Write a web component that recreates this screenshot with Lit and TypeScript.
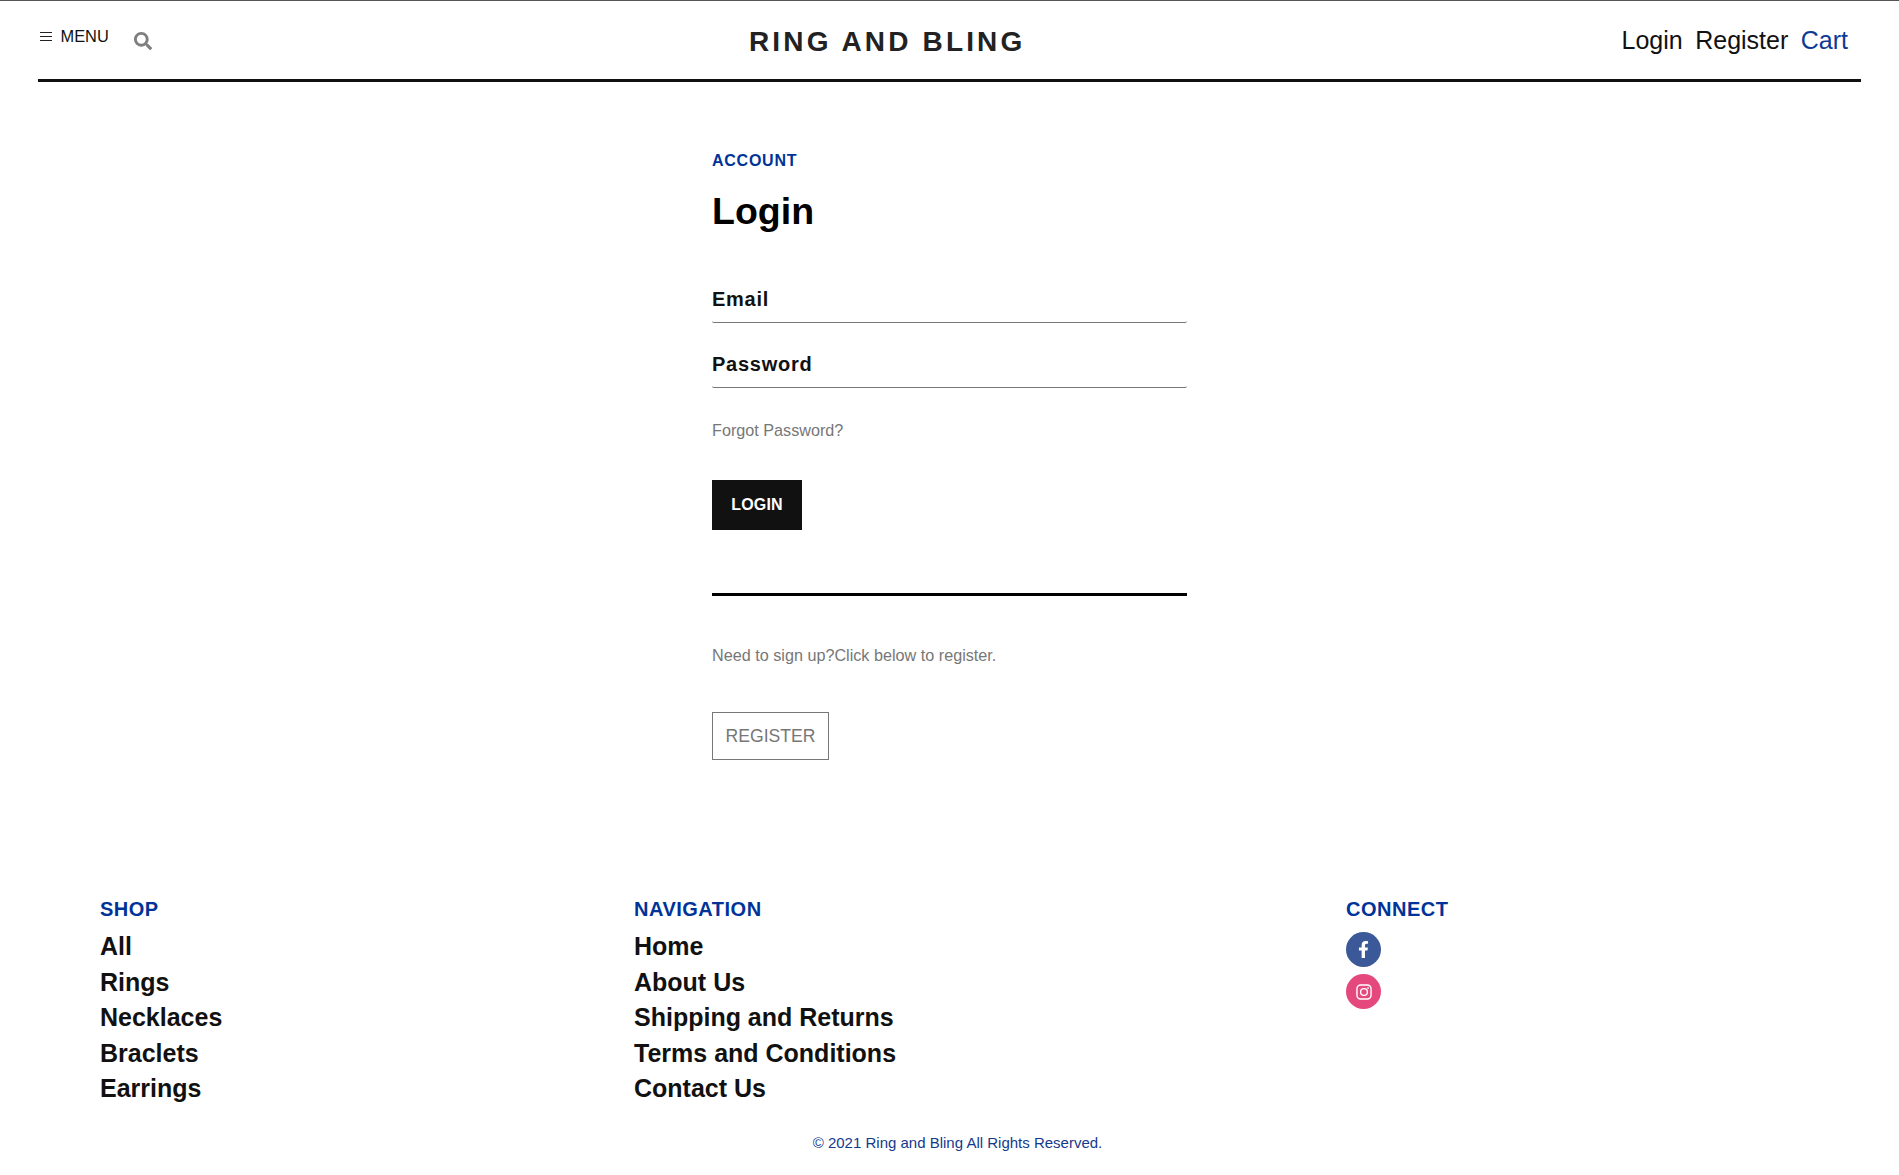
import { LitElement, html, css } from "lit";
import { customElement } from "lit/decorators.js";

const SHOP = ["All", "Rings", "Necklaces", "Braclets", "Earrings"];
const NAV = ["Home", "About Us", "Shipping and Returns", "Terms and Conditions", "Contact Us"];

@customElement("app-root")
export class AppRoot extends LitElement {
  static styles = css`
    :host {
      display: block;
      min-height: 1175px;
      background: #fff;
      font-family: "Liberation Sans", Arial, sans-serif;
      color: #111;
      border-top: 1px solid #555;
      box-sizing: border-box;
    }
    a { color: inherit; text-decoration: none; }
    .header {
      margin: 0 38px;
      height: 78px;
      border-bottom: 3px solid #111;
      display: grid;
      grid-template-columns: 711px auto 1fr;
      align-items: start;
    }
    .left { display: flex; align-items: flex-start; padding-top: 26px; padding-left: 2px; }
    .burger { display: block; margin-top: 5px; width: 12px; height: 10px; }
    .menu { font-size: 16.4px; line-height: 18px; margin-left: 8.5px; color: #111; }
    .search { display: block; width: 18px; height: 18px; margin-left: 25px; margin-top: 5px; fill: #7f7f7f; }
    .brand {
      font-size: 28px;
      font-weight: 700;
      letter-spacing: 3.15px;
      line-height: 32px;
      padding-top: 25px;
      color: #222;
      white-space: nowrap;
    }
    .right {
      display: flex;
      justify-content: flex-end;
      gap: 12.5px;
      padding-top: 25px;
      padding-right: 13px;
      font-size: 25px;
      line-height: 28px;
    }
    .cart { color: #0d3a94; }
    .main {
      width: 475px;
      margin: 0 auto;
      display: flex;
      flex-direction: column;
      align-items: flex-start;
    }
    .eyebrow {
      margin-top: 69px;
      font-size: 16px;
      font-weight: 700;
      line-height: 20px;
      letter-spacing: 0.75px;
      color: #003399;
    }
    h1 {
      margin: 18px 0 0;
      font-size: 37.5px;
      line-height: 44px;
      font-weight: 700;
      color: #000;
    }
    .field {
      display: block;
      box-sizing: border-box;
      width: 100%;
      height: 48px;
      padding: 1px 0 0;
      border: 0;
      border-bottom: 1.5px solid #777;
      border-radius: 2px;
      outline: 0;
      background: transparent;
      font: 700 20px "Liberation Sans", Arial, sans-serif;
      letter-spacing: 0.75px;
      color: #111;
    }
    .field::placeholder { color: #111; opacity: 1; }
    .email { margin-top: 42px; }
    .password { margin-top: 17px; }
    .muted { font-size: 16.2px; line-height: 20px; color: #777; }
    .forgot { margin-top: 32px; }
    .login {
      margin-top: 40px;
      width: 90px;
      height: 50px;
      border: 0;
      padding: 0 0 1px;
      background: #111;
      color: #fff;
      font: 700 16px "Liberation Sans", Arial, sans-serif;
      letter-spacing: 0.2px;
    }
    .rule { width: 100%; height: 3px; margin-top: 63px; background: #000; }
    .signup { margin-top: 49px; }
    .register {
      margin-top: 47px;
      width: 117px;
      height: 48px;
      box-sizing: border-box;
      border: 1px solid #777;
      padding: 0;
      background: #fff;
      color: #777;
      font: 400 17.6px "Liberation Sans", Arial, sans-serif;
    }
    .footer {
      margin-top: 137px;
      padding-left: 100px;
      display: grid;
      grid-template-columns: 534px 712px 1fr;
    }
    .head {
      font-size: 20px;
      font-weight: 700;
      line-height: 24px;
      letter-spacing: 0.5px;
      color: #003399;
    }
    .links { display: flex; flex-direction: column; margin-top: 7px; }
    .links a { font-size: 25px; font-weight: 700; line-height: 35.25px; color: #111; }
    .links a:first-child { line-height: 37px; }
    .social { display: flex; flex-direction: column; gap: 7px; margin-top: 11px; }
    .circle {
      width: 35px;
      height: 35px;
      border-radius: 50%;
      display: flex;
      align-items: center;
      justify-content: center;
    }
    .fb { background: #3b5998; }
    .ig { background: #e4487c; }
    .fb svg { width: 11px; height: 17px; fill: #fff; display: block; }
    .ig svg { width: 16px; height: 16px; display: block; fill: none; stroke: #fff; stroke-width: 1.5; }
    .copy {
      margin-top: 27px;
      padding-left: 16px;
      text-align: center;
      font-size: 15px;
      line-height: 20px;
      color: #143a8c;
    }
  `;

  render() {
    return html`
      <header class="header">
        <div class="left">
          <svg class="burger" viewBox="0 0 12 10" aria-hidden="true">
            <path d="M0 .5h12M0 4.5h12M0 8.5h12" stroke="#222" stroke-width="1" fill="none"></path>
          </svg>
          <span class="menu">MENU</span>
          <svg class="search" viewBox="0 0 512 512" aria-hidden="true">
            <path d="M505 442.7L405.3 343c-4.5-4.5-10.6-7-17-7H372c27.6-35.3 44-79.7 44-128C416 93.1 322.9 0 208 0S0 93.1 0 208s93.1 208 208 208c48.3 0 92.7-16.4 128-44v16.3c0 6.4 2.5 12.5 7 17l99.7 99.7c9.4 9.4 24.6 9.4 33.9 0l28.3-28.3c9.4-9.4 9.4-24.6.1-34zM208 336c-70.7 0-128-57.2-128-128 0-70.7 57.2-128 128-128 70.7 0 128 57.2 128 128 0 70.7-57.2 128-128 128z"></path>
          </svg>
        </div>
        <div class="brand">RING AND BLING</div>
        <nav class="right">
          <a href="#">Login</a>
          <a href="#">Register</a>
          <a href="#" class="cart">Cart</a>
        </nav>
      </header>
      <main class="main">
        <div class="eyebrow">ACCOUNT</div>
        <h1>Login</h1>
        <input class="field email" type="email" placeholder="Email" />
        <input class="field password" type="password" placeholder="Password" />
        <a href="#" class="muted forgot">Forgot Password?</a>
        <button class="login">LOGIN</button>
        <div class="rule"></div>
        <div class="muted signup">Need to sign up?Click below to register.</div>
        <button class="register">REGISTER</button>
      </main>
      <footer class="footer">
        <section>
          <div class="head">SHOP</div>
          <div class="links">${SHOP.map((l) => html`<a href="#">${l}</a>`)}</div>
        </section>
        <section>
          <div class="head">NAVIGATION</div>
          <div class="links">${NAV.map((l) => html`<a href="#">${l}</a>`)}</div>
        </section>
        <section>
          <div class="head">CONNECT</div>
          <div class="social">
            <a href="#" class="circle fb" aria-label="Facebook">
              <svg viewBox="0 0 320 512"><path d="M279.14 288l14.22-92.66h-88.91v-60.13c0-25.35 12.42-50.06 52.24-50.06h40.42V6.26S260.43 0 225.36 0c-73.22 0-121.08 44.38-121.08 124.72v70.62H22.89V288h81.39v224h100.17V288z"></path></svg>
            </a>
            <a href="#" class="circle ig" aria-label="Instagram">
              <svg viewBox="0 0 17 17">
                <rect x="1" y="1" width="15" height="15" rx="4"></rect>
                <circle cx="8.5" cy="8.5" r="3.6"></circle>
                <circle cx="12.8" cy="4.2" r="0.9" fill="#fff" stroke="none"></circle>
              </svg>
            </a>
          </div>
        </section>
      </footer>
      <div class="copy">© 2021 Ring and Bling All Rights Reserved.</div>
    `;
  }
}
